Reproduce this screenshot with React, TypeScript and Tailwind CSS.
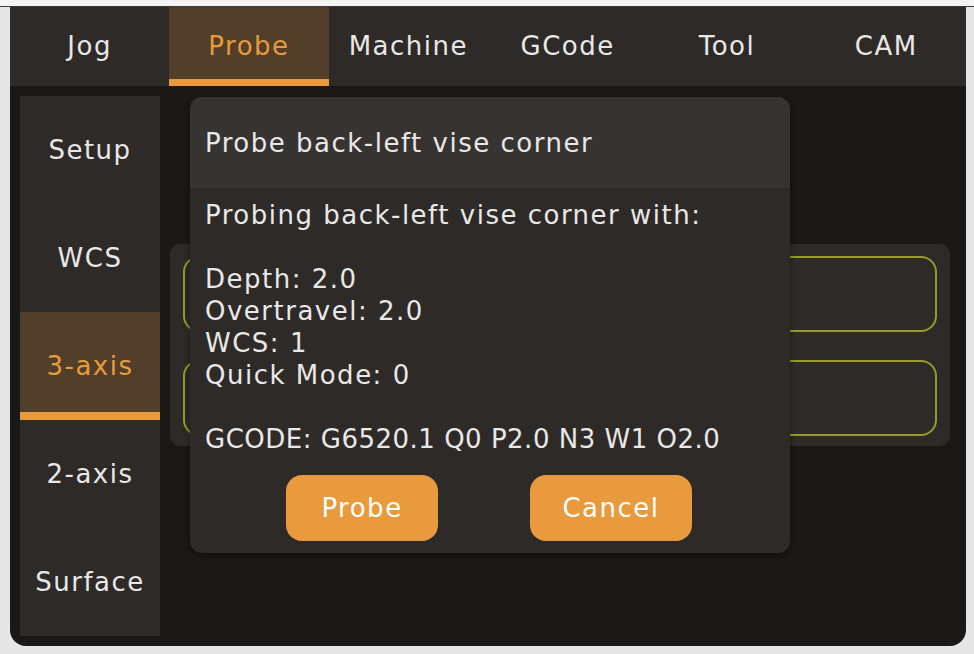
import React from 'react';

const tabs = ['Jog', 'Probe', 'Machine', 'GCode', 'Tool', 'CAM'];
const sideItems = ['Setup', 'WCS', '3-axis', '2-axis', 'Surface'];

const font = { fontFamily: '"DejaVu Sans", "Noto Sans", sans-serif' };

const App: React.FC = () => {
    const activeTab = 'Probe';
    const activeSide = '3-axis';

    return (
        <div className="w-[974px] h-[654px] bg-[#e6e6e6] overflow-hidden" style={font}>
            {/* browser strip */}
            <div className="h-[7px] bg-[#f4f4f4] border-b border-[#3a3a3a]" />

            {/* app window */}
            <div className="relative ml-[10px] w-[956px] h-[639px] bg-[#1b1917] rounded-b-[16px] overflow-hidden text-[26px] tracking-[1.5px]">
                {/* top tabs */}
                <div className="flex h-[79px] bg-[#2e2a27]">
                    {tabs.map(t => {
                        const active = t === activeTab;
                        return (
                            <div
                                key={t}
                                className={`flex-1 flex items-center justify-center border-b-[7px] ${
                                    active
                                        ? 'bg-[#523f29] text-[#e89a3c] border-[#e89a3c]'
                                        : 'text-[#e8e8e8] border-transparent'
                                }`}
                            >
                                <span className="pt-[7px]">{t}</span>
                            </div>
                        );
                    })}
                </div>

                {/* body */}
                <div className="flex gap-[10px] p-[10px] pr-[16px]">
                    {/* side menu */}
                    <div className="w-[140px] h-[540px] flex flex-col bg-[#2e2a27]">
                        {sideItems.map(s => {
                            const active = s === activeSide;
                            return (
                                <div
                                    key={s}
                                    className={`h-[108px] flex items-center justify-center ${
                                        active
                                            ? 'bg-[#523f29] text-[#e89a3c] border-b-[8px] border-[#e89a3c]'
                                            : 'text-[#e8e8e8]'
                                    }`}
                                >
                                    <span className={active ? 'pt-[8px]' : ''}>{s}</span>
                                </div>
                            );
                        })}
                    </div>

                    {/* content behind the dialog */}
                    <div className="flex-1 pt-[148px]">
                        <div className="h-[202px] bg-[#2e2a27] rounded-[10px] px-[13px] pt-[12px] flex flex-col gap-[28px]">
                            <div className="h-[76px] rounded-[16px] border-2 border-[#959a2a]" />
                            <div className="h-[76px] rounded-[16px] border-2 border-[#959a2a]" />
                        </div>
                    </div>
                </div>

                {/* dialog */}
                <div className="absolute left-[180px] top-[90px] w-[600px] h-[456px] rounded-[12px] overflow-hidden bg-[#2e2a27] shadow-[0_2px_6px_rgba(0,0,0,0.4)] text-[#e8e8e8]">
                    <div className="h-[91px] bg-[#373331] flex items-center px-[15px] pt-[2px]">
                        Probe back-left vise corner
                    </div>
                    <div className="px-[15px] pt-[11px] leading-[32px] whitespace-nowrap">
                        <div>Probing back-left vise corner with:</div>
                        <div className="h-[32px]" />
                        <div>Depth: 2.0</div>
                        <div>Overtravel: 2.0</div>
                        <div>WCS: 1</div>
                        <div>Quick Mode: 0</div>
                        <div className="h-[32px]" />
                        <div className="tracking-[0.5px]">GCODE: G6520.1 Q0 P2.0 N3 W1 O2.0</div>
                    </div>
                    <div className="flex pt-[20px] pl-[96px] gap-[92px]">
                        <button className="w-[152px] h-[66px] rounded-[16px] bg-[#e89a3c] text-white tracking-[1.5px]">
                            Probe
                        </button>
                        <button className="w-[162px] h-[66px] rounded-[16px] bg-[#e89a3c] text-white tracking-[1.5px]">
                            Cancel
                        </button>
                    </div>
                </div>
            </div>
        </div>
    );
};

export default App;
